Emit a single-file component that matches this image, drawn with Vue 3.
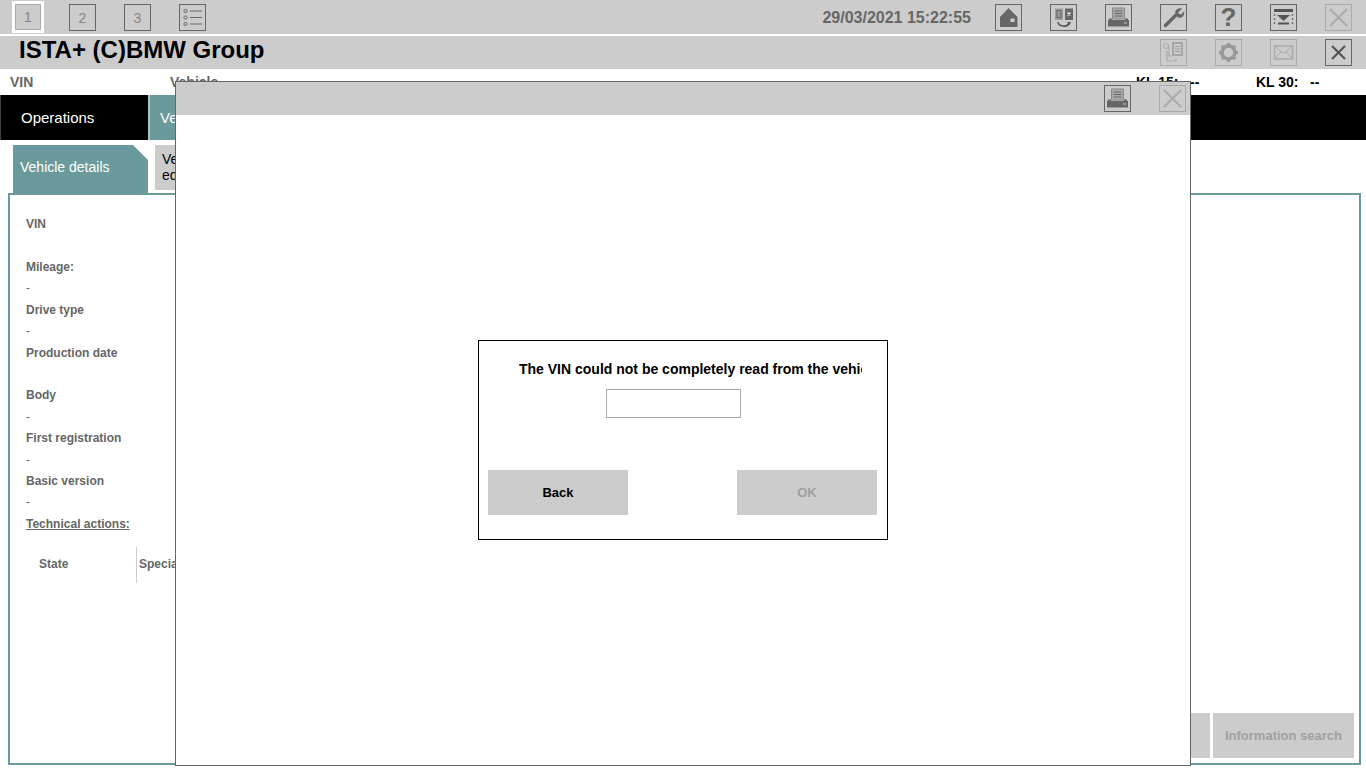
<template>
  <div class="screen">
    <!-- Top toolbar -->
    <div class="topbar">
      <div class="step-active"><span>1</span></div>
      <div class="ico step first">2</div>
      <div class="ico step">3</div>
      <div class="ico">
        <svg viewBox="0 0 25 25">
          <g fill="none" stroke="#666" stroke-width="1">
            <circle cx="5.5" cy="6" r="1.6" />
            <circle cx="5.5" cy="12.5" r="1.6" />
            <circle cx="5.5" cy="19" r="1.6" />
          </g>
          <path d="M10 6h12M10 12.5h12M10 19h12" stroke="#666" stroke-width="1" />
        </svg>
      </div>
      <div class="clock">29/03/2021 15:22:55</div>
      <div class="ico">
        <svg viewBox="0 0 25 25">
          <path d="M12.5 3 21.5 12V22H4V12Z" fill="#666" />
          <rect x="14.500" y="13.500" width="4" height="3.500" fill="#ccc" />
        </svg>
      </div>
      <div class="ico">
        <svg viewBox="0 0 25 25">
          <rect x="4" y="3.500" width="8" height="11.500" fill="#999" />
          <rect x="6" y="5.500" width="4" height="7" fill="none" stroke="#666" stroke-width="1" />
          <rect x="14" y="3.500" width="8" height="11.500" fill="#666" />
          <path d="M16.500 7.500l3 3M19.500 7.500l-3 3" stroke="#eee" stroke-width="1.200" />
          <path d="M7 17c.5 5 10 5.500 11 1" fill="none" stroke="#555" stroke-width="1.600" />
          <path d="M16 17h4l-1.500 3z" fill="#555" />
        </svg>
      </div>
      <div class="ico">
        <svg viewBox="0 0 25 25">
          <path d="M6.500 3h12v11h-12z" fill="#aaa" stroke="#888" />
          <path d="M8.500 6h8M8.500 8.500h8M8.500 11h8" stroke="#666" stroke-width="1" />
          <path d="M2 15h21v6.500H2z" fill="#666" />
          <path d="M3 13.500h3v2H3zM19 13.500h3v2h-3z" fill="#666" />
          <rect x="18" y="17.500" width="3" height="1" fill="#ccc" />
        </svg>
      </div>
      <div class="ico">
        <svg viewBox="0 0 25 25">
          <path d="M4.500 20.500 15 10" stroke="#666" stroke-width="3.500" stroke-linecap="round" />
          <path d="M14 7.500c.5-3 4-5 7-3.800L17.500 7l.5 2 2 .5 3.200-3.300c.8 3.500-2 7.500-6 6.500z" fill="#666" />
        </svg>
      </div>
      <div class="ico help">?</div>
      <div class="ico">
        <svg viewBox="0 0 25 25">
          <rect x="3" y="4" width="19" height="3" fill="#555" />
          <path d="M3.500 9v10M21.500 9v10" stroke="#777" stroke-width="1.500" stroke-dasharray="2 2" />
          <path d="M6 10h13l-6.500 6z" fill="#555" />
          <rect x="7" y="17.500" width="11" height="2" fill="#555" />
        </svg>
      </div>
      <div class="ico off">
        <svg viewBox="0 0 25 25"><path d="M4 4l17 17M21 4 4 21" stroke="#aaa" stroke-width="1.800" /></svg>
      </div>
    </div>

    <!-- Title bar -->
    <div class="titlebar">
      <h1>ISTA+ (C)BMW Group</h1>
      <div class="ico off">
        <svg viewBox="0 0 25 25">
          <circle cx="5" cy="6" r="2.500" fill="none" stroke="#aaa" />
          <rect x="12" y="3" width="9" height="12" fill="none" stroke="#999" stroke-width="1.500" />
          <path d="M14 6.500h5M14 9h5M14 11.500h5" stroke="#999" />
          <path d="M8 7v9h3M6 11v10h9v-3" fill="none" stroke="#aaa" stroke-width="1.200" />
        </svg>
      </div>
      <div class="ico off">
        <svg viewBox="0 0 25 25">
          <circle cx="12.500" cy="12.500" r="6.500" fill="none" stroke="#999" stroke-width="3.500" />
          <path
            d="M12.500 3v4M12.500 18v4M3 12.500h4M18 12.500h4M5.800 5.800l2.800 2.800M16.400 16.400l2.800 2.800M19.200 5.800l-2.800 2.800M8.600 16.400l-2.800 2.800"
            stroke="#999"
            stroke-width="3"
          />
        </svg>
      </div>
      <div class="ico off">
        <svg viewBox="0 0 25 25">
          <rect x="3.500" y="6" width="18" height="13" fill="none" stroke="#aaa" stroke-width="1.500" />
          <path d="M4 6.500l8.500 7 8.500-7M4 18.500l6-6.500M21 18.500l-6-6.500" fill="none" stroke="#aaa" />
        </svg>
      </div>
      <div class="ico">
        <svg viewBox="0 0 25 25"><path d="M6 6l13 13M19 6 6 19" stroke="#555" stroke-width="2.200" /></svg>
      </div>
    </div>

    <!-- Vehicle summary -->
    <div class="inforow">
      <span class="info-vin">VIN</span>
      <span class="info-vehicle">Vehicle</span>
      <span class="kl kl15"><b>KL 15:</b><b>--</b></span>
      <span class="kl kl30"><b>KL 30:</b><b>--</b></span>
    </div>

    <!-- Main nav -->
    <div class="mainnav">
      <div class="nav-item">Operations</div>
      <div class="nav-item current">Vehicle management</div>
    </div>

    <div class="subtabs">
      <div class="subtab current">Vehicle details</div>
      <div class="subtab">Vehicle<br />equipment</div>
    </div>

    <!-- Details panel -->
    <div class="panel">
      <div class="details">
        <div v-for="(row, i) in rows" :key="i" :class="row.cls">{{ row.text }}</div>
      </div>
      <div class="table-head">
        <div class="col-state">State</div>
        <div class="col-special">Special</div>
      </div>
      <div class="panel-actions">
        <button class="btn" disabled>Print</button>
        <button class="btn" disabled>Information search</button>
      </div>
    </div>

    <!-- Modal window -->
    <div class="modal">
      <div class="modal-head">
        <div class="ico">
          <svg viewBox="0 0 25 25">
            <path d="M6.500 3h12v11h-12z" fill="#aaa" stroke="#888" />
            <path d="M8.500 6h8M8.500 8.500h8M8.500 11h8" stroke="#666" stroke-width="1" />
            <path d="M2 15h21v6.500H2z" fill="#666" />
            <path d="M3 13.500h3v2H3zM19 13.500h3v2h-3z" fill="#666" />
            <rect x="18" y="17.500" width="3" height="1" fill="#ccc" />
          </svg>
        </div>
        <div class="ico off">
          <svg viewBox="0 0 25 25"><path d="M4 4l17 17M21 4 4 21" stroke="#aaa" stroke-width="1.800" /></svg>
        </div>
      </div>
      <div class="modal-body">
        <div class="dialog">
          <div class="dialog-msg">The VIN could not be completely read from the vehicle. Please enter it.</div>
          <input v-model="vin" class="dialog-input" type="text" />
          <div class="dialog-actions">
            <button class="dlg-btn">Back</button>
            <button class="dlg-btn" disabled>OK</button>
          </div>
        </div>
      </div>
    </div>
  </div>
</template>

<script setup>
import { ref } from 'vue'

const vin = ref('')

const rows = [
  { text: 'VIN', cls: 'label' },
  { text: '', cls: 'value' },
  { text: 'Mileage:', cls: 'label' },
  { text: '-', cls: 'value' },
  { text: 'Drive type', cls: 'label' },
  { text: '-', cls: 'value' },
  { text: 'Production date', cls: 'label' },
  { text: '', cls: 'value' },
  { text: 'Body', cls: 'label' },
  { text: '-', cls: 'value' },
  { text: 'First registration', cls: 'label' },
  { text: '-', cls: 'value' },
  { text: 'Basic version', cls: 'label' },
  { text: '-', cls: 'value' },
  { text: 'Technical actions:', cls: 'label link' }
]
</script>

<style>
html,
body {
  margin: 0;
  padding: 0;
  overflow: hidden;
}
</style>

<style scoped>
.screen {
  position: relative;
  width: 1366px;
  height: 768px;
  overflow: hidden;
  display: flex;
  flex-direction: column;
  background: #fff;
  font-family: 'Liberation Sans', Arial, sans-serif;
  color: #000;
}

/* toolbar icons */
.ico {
  width: 27px;
  height: 27px;
  box-sizing: border-box;
  flex: none;
  border: 1px solid #666;
  display: flex;
  align-items: center;
  justify-content: center;
}

.ico svg {
  width: 25px;
  height: 25px;
  display: block;
}

.ico.off {
  border-color: #aaa;
}

.step {
  font-size: 14px;
  color: #888;
}

.help {
  font-size: 26px;
  font-weight: 700;
  color: #666;
}

.topbar {
  height: 34px;
  box-sizing: border-box;
  padding: 4px 14px 0 12px;
  display: flex;
  align-items: flex-start;
  gap: 28px;
  background: #ccc;
}

.step-active {
  width: 32px;
  height: 32px;
  margin: -3px -3px 0 0;
  box-sizing: border-box;
  border: 3px solid #fff;
  font-size: 14px;
  color: #888;
}

.step-active span {
  display: flex;
  align-items: center;
  justify-content: center;
  height: 100%;
  box-sizing: border-box;
  border: 1px solid #aaa;
}

.clock {
  margin-left: auto;
  margin-right: -4px;
  line-height: 27px;
  font-size: 16px;
  font-weight: 700;
  color: #666;
}

.titlebar {
  height: 33px;
  margin-top: 2px;
  box-sizing: border-box;
  padding: 0 14px 0 19px;
  display: flex;
  align-items: center;
  gap: 28px;
  background: #ccc;
}

.titlebar h1 {
  margin: -5px auto 0 0;
  font-size: 24px;
  font-weight: 700;
  line-height: 28px;
}

.inforow {
  height: 26px;
  display: flex;
  align-items: center;
  padding-left: 10px;
  font-size: 14px;
  font-weight: 700;
}

.info-vin {
  width: 160px;
  color: #666;
}

.info-vehicle {
  flex: 1;
  color: #666;
}

.kl {
  display: flex;
  font-weight: 700;
}

.kl b:first-child {
  width: 54px;
}

.kl15 {
  width: 120px;
}

.kl30 {
  width: 110px;
}

.mainnav {
  height: 45px;
  display: flex;
  background: #000;
}

.nav-item {
  width: 150px;
  box-sizing: border-box;
  padding-left: 20px;
  line-height: 45px;
  font-size: 15px;
  color: #fff;
  border-left: 1px solid #444;
  border-right: 2px solid #bbb;
}

.nav-item.current {
  width: 200px;
  padding-left: 10px;
  border: 0;
  background: #6a9a9b;
}

.subtabs {
  height: 48px;
  margin-top: 5px;
  padding-left: 13px;
  display: flex;
  align-items: flex-start;
  gap: 7px;
}

.subtab {
  width: 120px;
  height: 45px;
  box-sizing: border-box;
  padding: 6px 7px;
  background: #ccc;
  font-size: 14px;
  line-height: 16px;
}

.subtab.current {
  width: 135px;
  height: 48px;
  padding: 0 7px;
  line-height: 44px;
  color: #fff;
  background: #6a9a9b;
  clip-path: polygon(0 0, 120px 0, 100% 15px, 100% 100%, 0 100%);
}

.panel {
  width: 1353px;
  height: 572px;
  margin-left: 8px;
  box-sizing: border-box;
  border: 2px solid #6a9a9b;
  padding: 19px 5px 5px 16px;
  display: flex;
  flex-direction: column;
  font-size: 12px;
  color: #666;
}

.details > div {
  height: 21.43px;
  line-height: 21.43px;
}

.label {
  font-weight: 700;
}

.link {
  text-decoration: underline;
}

.table-head {
  display: flex;
  height: 36px;
  margin-top: 11.5px;
  align-items: center;
  font-weight: 700;
}

.col-state {
  width: 97px;
  height: 36px;
  margin-left: 13px;
  line-height: 34px;
}

.col-special {
  height: 36px;
  padding-left: 2px;
  line-height: 34px;
  border-left: 1px solid #ccc;
}

.panel-actions {
  margin-top: auto;
  display: flex;
  justify-content: flex-end;
  gap: 3px;
}

.btn {
  width: 141px;
  height: 45px;
  padding: 0;
  border: 0;
  background: #ccc;
  color: #a0a0a0;
  font: 700 13px 'Liberation Sans', Arial, sans-serif;
}

/* modal window sits over the page */
.modal {
  position: absolute;
  left: 175px;
  top: 81px;
  width: 1016px;
  height: 685px;
  box-sizing: border-box;
  border: 1px solid #666;
  display: flex;
  flex-direction: column;
  background: #fff;
}

.modal-head {
  height: 33px;
  flex: none;
  padding-right: 4px;
  display: flex;
  justify-content: flex-end;
  align-items: center;
  gap: 28px;
  background: #ccc;
}

.modal-body {
  flex: 1;
  display: flex;
  align-items: center;
  justify-content: center;
}

.dialog {
  width: 410px;
  height: 200px;
  box-sizing: border-box;
  border: 1px solid #000;
  padding-top: 19px;
  display: flex;
  flex-direction: column;
  align-items: flex-start;
}

.dialog-msg {
  width: 343px;
  margin-left: 40px;
  overflow: hidden;
  white-space: nowrap;
  line-height: 18px;
  font-size: 14px;
  font-weight: 700;
}

.dialog-input {
  width: 135px;
  height: 29px;
  margin: 11px 0 0 127px;
  box-sizing: border-box;
  padding: 0 4px;
  border: 1px solid #aaa;
  background: #fff;
  outline: none;
}

.dialog-actions {
  width: 389px;
  margin: 52px 0 0 9px;
  display: flex;
  justify-content: space-between;
}

.dlg-btn {
  width: 140px;
  height: 45px;
  padding: 0 0 1px;
  border: 0;
  background: #ccc;
  color: #000;
  font: 700 13px 'Liberation Sans', Arial, sans-serif;
}

.dlg-btn:disabled {
  color: #a0a0a0;
}
</style>
